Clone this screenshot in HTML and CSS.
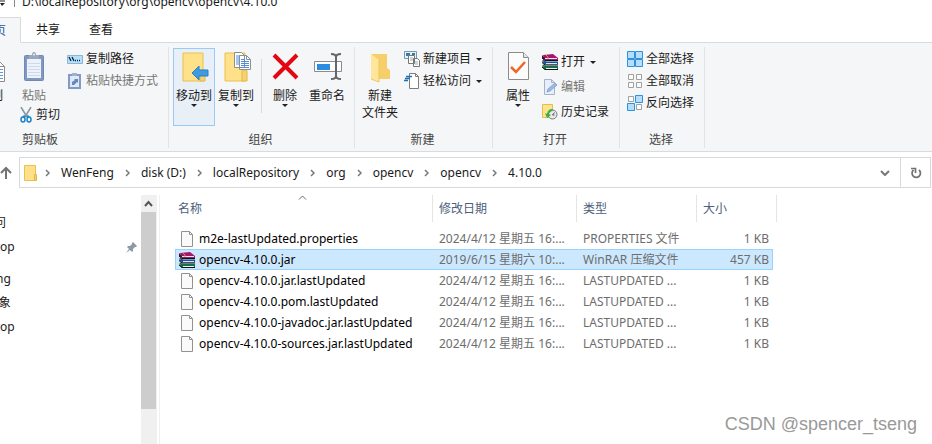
FILE: index.html
```html
<!DOCTYPE html>
<html lang="zh-CN">
<head>
    <meta charset="UTF-8">
    <meta name="viewport" content="width=device-width, initial-scale=1.0">
    <title>D:\localRepository\org\opencv\opencv\4.10.0</title>
    <link rel="stylesheet" href="styles.css">
</head>
<body>
    <!-- Shared icons -->
    <svg class="icon-defs" width="0" height="0">
        <symbol id="icon-folder" viewBox="0 0 27 32">
            <path d="M1 1h20v28H1z" fill="#ffe18a" stroke="#ebc04a"/>
            <path d="M18 29V19q0-1 1-1h3q1 0 1 1v10z" fill="#f5d374" stroke="#e3b840"/>
        </symbol>
        <symbol id="icon-rar" viewBox="0 0 16 16">
            <path d="M1 1L11 0l5 4v2H3z" fill="#a3186c"/>
            <path d="M0 1l3 3v2L0 4z" fill="#4a0831"/>
            <path d="M3 4h12v1H3z" fill="#eee"/>
            <path d="M1 5.500l3 2h12v3H3L0 8z" fill="#1c4d9c"/>
            <path d="M4 9h11v1H4z" fill="#d9e4f4"/>
            <path d="M1 10.500l3 1.500h12v4H3L0 13z" fill="#16704c"/>
            <path d="M4 14h11v1H4z" fill="#e8f4ea"/>
            <path d="M0 4l3 2.500h13M0 8.500L3 11h13M0 13l3 2.500h13" fill="none" stroke="#111"/>
            <path d="M4 1l2 2v2M1 7v1M1 12v1" fill="none" stroke="#c79a2e"/>
        </symbol>
        <symbol id="icon-file" viewBox="0 0 12 16">
            <path d="M.5.5h8l3 3v12H.5z" fill="#fafafa" stroke="#929292"/>
            <path d="M8.500.5v3h3" fill="none" stroke="#929292"/>
        </symbol>
        <symbol id="icon-chevron" viewBox="0 0 5 8">
            <path d="M1 1l3 3-3 3" fill="none" stroke="#777" stroke-width="1.500"/>
        </symbol>
    </svg>

    <!-- Title bar -->
    <header class="titlebar">
        <svg class="qat-arrow" width="5" height="7" viewBox="0 0 5 7"><path d="M0 1h5" stroke="#222"/><path d="M0 3h5L2 6z" fill="#222"/></svg>
        <span class="titlebar-line"></span>
        <span class="titlebar-text">D:\localRepository\org\opencv\opencv\4.10.0</span>
    </header>

    <!-- Tabs -->
    <nav class="tabs">
        <a class="tab active" href="#home">主页</a>
        <a class="tab" href="#share">共享</a>
        <a class="tab" href="#view">查看</a>
    </nav>

    <!-- Ribbon -->
    <div class="ribbon" id="home">
        <section class="group group-clipboard">
            <div class="group-body">
                <button class="big-btn">
                    <svg width="28" height="32" viewBox="0 0 28 32"><path d="M8.500 9.500h14l5 5v15h-19z" fill="#fff" stroke="#8c8c8c"/><path d="M22.500 9.500v5h5" fill="none" stroke="#8c8c8c"/><path d="M11 14.500h10M11 17.500h15M11 20.500h15M11 23.500h15M11 26.500h15" stroke="#5f98dc"/></svg>
                    <span>复制</span>
                </button>
                <div class="paste-col">
                    <button class="big-btn disabled">
                        <svg width="22" height="32" viewBox="0 0 22 32"><rect x="1.500" y="3.500" width="19" height="25" rx="1" fill="#8199c2" stroke="#7189b4"/><path d="M4 7h14v19H4z" fill="#edf2fb"/><path d="M5 11.500h12M5 14.500h12M5 17.500h12M5 20.500h12M5 23.500h12" stroke="#cfd9eb"/><path d="M6 7V3h3q0-3 2-3t2 3h3v4z" fill="#9aa7bd"/><circle cx="11" cy="2.500" r="1" fill="#eef"/></svg>
                        <span>粘贴</span>
                    </button>
                    <button class="small-btn">
                        <svg width="12" height="16" viewBox="0 0 12 16"><path d="M1 0l6 10M11 0L5 10" stroke="#8a949e" stroke-width="1.500"/><path d="M5 9l-2 1M7 9l2 1" stroke="#1a86c8" stroke-width="2"/><ellipse cx="3" cy="12.500" rx="2" ry="2.500" fill="none" stroke="#1a86c8" stroke-width="1.500"/><ellipse cx="9" cy="12.500" rx="2" ry="2.500" fill="none" stroke="#1a86c8" stroke-width="1.500"/></svg>
                        <span>剪切</span>
                    </button>
                </div>
                <div class="small-col">
                    <button class="small-btn">
                        <svg width="16" height="16" viewBox="0 0 16 16"><path d="M.5 4.500h15v8H.5z" fill="#b5e0fb" stroke="#8cb5d2"/><path d="M2 6l2 4M5 6l2 4" stroke="#123" stroke-width="1.300"/><path d="M8 9.500h1M10 9.500h1M12 9.500h1" stroke="#123" stroke-width="1.500"/></svg>
                        <span>复制路径</span>
                    </button>
                    <button class="small-btn disabled">
                        <svg width="16" height="16" viewBox="0 0 16 16"><rect x="2" y="2" width="11" height="13" fill="#dfe8f6" stroke="#839bc4" stroke-width="2"/><path d="M5 0h5v3H5z" fill="#9fb0cd"/><path d="M5 12V9l3-2-1-1h4v4l-1-1-3 3z" fill="#6886b8"/></svg>
                        <span>粘贴快捷方式</span>
                    </button>
                </div>
            </div>
            <h2 class="group-label">剪贴板</h2>
        </section>

        <section class="group">
            <div class="group-body">
                <button class="big-btn selected">
                    <svg width="32" height="32" viewBox="0 0 32 32"><use href="#icon-folder" x="4" y="0" width="27" height="32"/><path d="M14 21l7-7v4h9v6h-9v4z" fill="#3e9ae3" stroke="#2b7fc4"/></svg>
                    <span>移动到</span>
                    <i class="arrow"></i>
                </button>
                <button class="big-btn">
                    <svg width="32" height="32" viewBox="0 0 32 32"><use href="#icon-folder" x="4" y="0" width="27" height="32"/><path d="M14.500.5h7l3 3v12h-10zM19.500 3.500h7l4 4v10h-11z" fill="#fff" stroke="#8a8f96"/><path d="M26.500 3.500v4h4" fill="none" stroke="#8a8f96"/><path d="M16 4h4M16 6h3M16 8h3M16 10h3M16 12h3M21 7.500h4M21 9.500h8M21 11.500h8M21 13.500h8M21 15.500h8" stroke="#4f8fda"/></svg>
                    <span>复制到</span>
                    <i class="arrow"></i>
                </button>
                <span class="divider"></span>
                <button class="big-btn">
                    <svg width="32" height="32" viewBox="0 0 32 32"><path d="M5 3l23 23M28 3L5 26" stroke="#e30613" stroke-width="4"/></svg>
                    <span>删除</span>
                    <i class="arrow"></i>
                </button>
                <button class="big-btn">
                    <svg width="32" height="32" viewBox="0 0 32 32"><path d="M3.500 9.500h27v10h-27z" fill="#fff" stroke="#8b8b8b"/><path d="M6 12h13v6H6z" fill="#2b8de0"/><path d="M20 2q5 0 5 3v19q0 3-5 3M30 2q-5 0-5 3M25 24q0 3 5 3" fill="none" stroke="#666" stroke-width="2"/></svg>
                    <span>重命名</span>
                </button>
            </div>
            <h2 class="group-label">组织</h2>
        </section>

        <section class="group">
            <div class="group-body">
                <button class="big-btn">
                    <svg width="32" height="32" viewBox="0 0 32 32"><path d="M7 2h16v14l3 2v9H7z" fill="#f6cf6b"/><path d="M7 2l8 6v22l-8-3z" fill="#ffe69b"/><path d="M15 8v22l-8-3" fill="none" stroke="#f0c85d"/></svg>
                    <span>新建<br>文件夹</span>
                </button>
                <div class="small-col">
                    <button class="small-btn">
                        <svg width="16" height="16" viewBox="0 0 16 16"><path d="M.5.5h12v7H.5z" fill="#e7f2fa" stroke="#7b98aa"/><path d="M2 2h4v3H2zM8 2h3v2H8z" fill="#3579a5"/><path d="M4.500 4.500h6v8h-6zM9.500 7.500h4l2 2v6h-6z" fill="#fff" stroke="#777"/><path d="M6 7h3M6 9h3M11 11h3M11 13h3" stroke="#9aa"/></svg>
                        <span>新建项目</span>
                        <i class="arrow"></i>
                    </button>
                    <button class="small-btn">
                        <svg width="16" height="16" viewBox="0 0 16 16"><path d="M5.500.5h6l3 3v12h-9z" fill="#fff" stroke="#7d7d7d"/><path d="M11.500.5v3h3" fill="none" stroke="#7d7d7d"/><path d="M2 3.500h6M1 5.500h5M0 7.500h4" stroke="#1d71b8" stroke-width="1.300"/></svg>
                        <span>轻松访问</span>
                        <i class="arrow"></i>
                    </button>
                </div>
            </div>
            <h2 class="group-label">新建</h2>
        </section>

        <section class="group">
            <div class="group-body">
                <button class="big-btn">
                    <svg width="32" height="32" viewBox="0 0 32 32"><path d="M6.500.5h15l5 5v22h-20z" fill="#fcfcfc" stroke="#8c8c8c"/><path d="M21.500.5v5h5" fill="#e4e4e4" stroke="#8c8c8c"/><path d="M9 15l5 5 9-10" fill="none" stroke="#f26522" stroke-width="2.500"/></svg>
                    <span>属性</span>
                    <i class="arrow"></i>
                </button>
                <div class="small-col loose">
                    <button class="small-btn">
                        <svg width="16" height="16"><use href="#icon-rar"/></svg>
                        <span>打开</span>
                        <i class="arrow"></i>
                    </button>
                    <button class="small-btn disabled">
                        <svg width="16" height="16" viewBox="0 0 16 16"><path d="M2.500.5h7l3 3v12h-10z" fill="#e8eefa" stroke="#a4b3cc"/><path d="M9.500.5v3h3" fill="none" stroke="#a4b3cc"/><path d="M5 13l1-3 7-6 2 2-7 6z" fill="#9eb9e2" stroke="#8ba7d3"/></svg>
                        <span>编辑</span>
                    </button>
                    <button class="small-btn">
                        <svg width="16" height="16" viewBox="0 0 16 16"><path d="M.5.5h10v13H.5z" fill="#ffe28a" stroke="#e5bd4c"/><circle cx="10.500" cy="10.500" r="4.500" fill="#e7e9eb" stroke="#777"/><path d="M10.500 11l2-2.500M10.500 11h2" stroke="#555"/><path d="M10 5q-4 0-5 5l-2-1 2 5 4-3-2-1q1-3 4-3z" fill="#3aad45"/></svg>
                        <span>历史记录</span>
                    </button>
                </div>
            </div>
            <h2 class="group-label">打开</h2>
        </section>

        <section class="group">
            <div class="group-body">
                <div class="small-col">
                    <button class="small-btn">
                        <svg width="16" height="16" viewBox="0 0 16 16"><path d="M.5.5h7v7h-7zM8.500.5h7v7h-7zM.5 8.500h7v7h-7zM8.500 8.500h7v7h-7z" fill="#b6defb" stroke="#2b91e0"/></svg>
                        <span>全部选择</span>
                    </button>
                    <button class="small-btn">
                        <svg width="16" height="16" viewBox="0 0 16 16"><path d="M1.500 1.500h5v5h-5zM9.500 1.500h5v5h-5zM1.500 9.500h5v5h-5zM9.500 9.500h5v5h-5z" fill="#fcfcfc" stroke="#a0a0a0"/></svg>
                        <span>全部取消</span>
                    </button>
                    <button class="small-btn">
                        <svg width="16" height="16" viewBox="0 0 16 16"><path d="M1.500 1.500h5v5h-5zM9.500 9.500h5v5h-5z" fill="#fcfcfc" stroke="#a0a0a0"/><path d="M8.500.5h7v7h-7zM.5 8.500h7v7h-7z" fill="#b6defb" stroke="#2b91e0"/></svg>
                        <span>反向选择</span>
                    </button>
                </div>
            </div>
            <h2 class="group-label">选择</h2>
        </section>
    </div>

    <!-- Address bar -->
    <div class="address-row">
        <button class="up-btn" aria-label="向上"><svg width="12" height="14" viewBox="0 0 12 14"><path d="M6 13V2M1 7l5-5 5 5" fill="none" stroke="#737373" stroke-width="2"/></svg></button>
        <div class="address">
            <nav class="crumbs">
                <svg class="crumb-folder" width="14" height="17" viewBox="0 0 14 17"><path d="M.5.5h11v15H.5z" fill="#ffe18a" stroke="#ebc04a"/><path d="M10.500 15.500v-6h2v6z" fill="#f5d374" stroke="#e3b840"/></svg>
                <svg width="5" height="8"><use href="#icon-chevron"/></svg>
                <a href="#">WenFeng</a>
                <svg width="5" height="8"><use href="#icon-chevron"/></svg>
                <a href="#">disk (D:)</a>
                <svg width="5" height="8"><use href="#icon-chevron"/></svg>
                <a href="#">localRepository</a>
                <svg width="5" height="8"><use href="#icon-chevron"/></svg>
                <a href="#">org</a>
                <svg width="5" height="8"><use href="#icon-chevron"/></svg>
                <a href="#">opencv</a>
                <svg width="5" height="8"><use href="#icon-chevron"/></svg>
                <a href="#">opencv</a>
                <svg width="5" height="8"><use href="#icon-chevron"/></svg>
                <a href="#">4.10.0</a>
            </nav>
            <button class="address-btn" aria-label="历史位置"><svg width="10" height="6" viewBox="0 0 10 6"><path d="M1 1l4 4 4-4" fill="none" stroke="#777" stroke-width="2"/></svg></button>
            <button class="address-btn refresh" aria-label="刷新"><svg width="12" height="12" viewBox="0 0 12 12"><path d="M9 3A4.200 4.200 0 1 1 3.500 3" fill="none" stroke="#737373" stroke-width="1.700"/><path d="M1 1.500h4.500V6" fill="none" stroke="#737373" stroke-width="1.700"/></svg></button>
        </div>
    </div>

    <!-- Folder tree and files -->
    <div class="content">
        <aside class="sidebar">
            <ul class="tree">
                <li><a href="#">快速访问</a></li>
                <li class="child">
                    <a href="#">Desktop</a>
                    <svg width="11" height="11" viewBox="0 0 11 11"><path d="M7 0l4 4-1 1H9L7 7v2L6 10 4 8 0 11l3-4-2-2 1-1h2l2-2V1z" fill="#8b9aa8"/></svg>
                </li>
                <li class="root"><a href="#">WenFeng</a></li>
                <li class="child"><a href="#">3D 对象</a></li>
                <li class="child"><a href="#">Desktop</a></li>
            </ul>
            <div class="scrollbar">
                <svg width="16" height="17" viewBox="0 0 16 17"><path d="M4 11l3.500-4 3.500 4" fill="none" stroke="#555" stroke-width="2"/></svg>
                <div class="scroll-thumb"></div>
            </div>
        </aside>

        <main class="files">
            <table class="file-table">
                <colgroup>
                    <col class="col-name">
                    <col class="col-date">
                    <col class="col-type">
                    <col class="col-size">
                    <col class="col-end">
                </colgroup>
                <thead>
                    <tr>
                        <th>名称<svg class="sort" width="9" height="5" viewBox="0 0 9 5"><path d="M1 4.500l3.500-3.500L8 4.500" fill="none" stroke="#666"/></svg></th>
                        <th>修改日期</th>
                        <th>类型</th>
                        <th colspan="2">大小</th>
                    </tr>
                </thead>
                <tbody>
                    <tr>
                        <td><div class="file-name"><svg width="16" height="16"><use href="#icon-file"/></svg>m2e-lastUpdated.properties</div></td>
                        <td>2024/4/12 星期五 16:...</td>
                        <td>PROPERTIES 文件</td>
                        <td>1 KB</td>
                    </tr>
                    <tr class="selected">
                        <td><div class="file-name"><svg width="16" height="16"><use href="#icon-rar"/></svg>opencv-4.10.0.jar</div></td>
                        <td>2019/6/15 星期六 10:...</td>
                        <td>WinRAR 压缩文件</td>
                        <td>457 KB</td>
                    </tr>
                    <tr>
                        <td><div class="file-name"><svg width="16" height="16"><use href="#icon-file"/></svg>opencv-4.10.0.jar.lastUpdated</div></td>
                        <td>2024/4/12 星期五 16:...</td>
                        <td>LASTUPDATED ...</td>
                        <td>1 KB</td>
                    </tr>
                    <tr>
                        <td><div class="file-name"><svg width="16" height="16"><use href="#icon-file"/></svg>opencv-4.10.0.pom.lastUpdated</div></td>
                        <td>2024/4/12 星期五 16:...</td>
                        <td>LASTUPDATED ...</td>
                        <td>1 KB</td>
                    </tr>
                    <tr>
                        <td><div class="file-name"><svg width="16" height="16"><use href="#icon-file"/></svg>opencv-4.10.0-javadoc.jar.lastUpdated</div></td>
                        <td>2024/4/12 星期五 16:...</td>
                        <td>LASTUPDATED ...</td>
                        <td>1 KB</td>
                    </tr>
                    <tr>
                        <td><div class="file-name"><svg width="16" height="16"><use href="#icon-file"/></svg>opencv-4.10.0-sources.jar.lastUpdated</div></td>
                        <td>2024/4/12 星期五 16:...</td>
                        <td>LASTUPDATED ...</td>
                        <td>1 KB</td>
                    </tr>
                </tbody>
            </table>
        </main>
    </div>

    <div class="watermark">CSDN @spencer_tseng</div>
</body>
</html>
```
FILE: styles.css
```css
* {
    box-sizing: border-box;
}

body {
    display: flex;
    flex-direction: column;
    height: 100vh;
    margin: 0;
    overflow: hidden;
    background: #fff;
    color: #1a1a1a;
    font-family: "Noto Sans", "Noto Sans CJK SC", sans-serif;
    font-size: 12px;
    line-height: 16px;
}

a {
    color: inherit;
    text-decoration: none;
}

button {
    padding: 0;
    border: 0;
    background: none;
    color: inherit;
    font: inherit;
}

svg {
    display: block;
    flex: none;
}

.icon-defs {
    position: absolute;
}

/* Title bar */
.titlebar {
    display: flex;
    flex: none;
    height: 17px;
    overflow: hidden;
}

.titlebar-line {
    width: 1px;
    height: 7px;
    margin: 0 7px 0 9px;
    background: #888;
}

.titlebar-text {
    margin-top: -6px;
}

/* Tabs */
.tabs {
    display: flex;
    flex: none;
    height: 26px;
    line-height: 25px;
}

.tab {
    padding: 0 14px 0 15px;
    border-bottom: 1px solid #dadbdc;
}

.tabs::after {
    content: "";
    flex: 1;
    border-bottom: 1px solid #dadbdc;
}

.tab.active {
    margin-left: -34px;
    border: 1px solid #dadbdc;
    border-bottom-color: #f5f6f7;
    background: #f5f6f7;
    color: #2b579a;
}

/* Ribbon */
.ribbon {
    display: flex;
    flex: none;
    height: 109px;
    padding: 4px 0 3px;
    border-bottom: 1px solid #dadbdc;
    background: #f5f6f7;
}

.group {
    display: flex;
    flex-direction: column;
    padding: 0 6px 0 4px;
    border-right: 1px solid #e2e3e4;
}

.group-clipboard {
    margin-left: -90px;
    padding: 0 6px 0 60px;
}

.group-body {
    display: flex;
    height: 85px;
}

.group-label {
    margin: 0;
    color: #444;
    font-size: 12px;
    font-weight: normal;
    line-height: 16px;
    text-align: center;
}

.group-clipboard .group-label {
    margin: 0 0 0 52px;
    text-align: left;
}

.big-btn {
    display: flex;
    flex-direction: column;
    align-items: center;
    width: 42px;
    height: 78px;
    margin-top: 1px;
    padding-top: 3px;
    border: 1px solid transparent;
    white-space: nowrap;
}

.big-btn span {
    margin-top: 3px;
    line-height: 17px;
}

.big-btn.selected {
    border-color: #99cbf7;
    background: #e8eff7;
}

.disabled {
    color: #767676;
}

.arrow {
    border: 3px solid transparent;
    border-top-color: #222;
    border-bottom: 0;
}

.divider {
    width: 1px;
    height: 54px;
    margin: 12px 2px 0 4px;
    background: #dadbdc;
}

.small-col {
    display: flex;
    flex-direction: column;
    gap: 6px;
    padding: 4px 4px 0 3px;
}

.small-col.loose {
    gap: 9px;
    padding-top: 7px;
}

.small-btn {
    display: flex;
    align-items: center;
    gap: 3px;
    height: 16px;
    white-space: nowrap;
}

.small-btn .arrow {
    margin-left: 2px;
}

.paste-col {
    display: flex;
    flex-direction: column;
    width: 52px;
}

.paste-col .big-btn {
    width: 44px;
    height: 59px;
}

.paste-col .small-btn {
    gap: 4px;
    margin-left: 8px;
}

/* Address bar */
.address-row {
    display: flex;
    flex: none;
    align-items: center;
    gap: 7px;
    padding: 5px 1px 7px 0;
}

.address {
    display: flex;
    flex: 1;
    height: 31px;
    border: 1px solid #d9d9d9;
}

.crumbs {
    display: flex;
    flex: 1;
    align-items: center;
    gap: 11px;
    padding-left: 4px;
}

.crumbs svg {
    margin-top: 1px;
}

.crumbs .crumb-folder {
    margin-right: -4px;
}

.address-btn {
    display: flex;
    align-items: center;
    justify-content: center;
    width: 30px;
}

.refresh {
    border-left: 1px solid #d9d9d9;
}

/* Content */
.content {
    display: flex;
    flex: 1;
    min-height: 0;
}

.sidebar {
    display: flex;
    width: 160px;
    padding-right: 2px;
    border-right: 1px solid #f0f0f0;
    overflow: hidden;
}

.tree {
    flex: 1;
    margin: 0 0 0 -42px;
    padding: 16px 0 0;
    list-style: none;
}

.tree li {
    display: flex;
    align-items: center;
    justify-content: space-between;
    height: 24px;
    padding-right: 4px;
}

.tree .child {
    padding-left: 10px;
}

.tree .root {
    margin-top: 8px;
}

.scrollbar {
    width: 16px;
    background: #f0f0f0;
}

.scroll-thumb {
    width: 15px;
    height: 79%;
    background: #cdcdcd;
}

.files {
    flex: 1;
    padding-left: 15px;
}

.file-table {
    width: 602px;
    border-spacing: 0;
    table-layout: fixed;
}

.col-name {
    width: 258px;
}

.col-date {
    width: 144px;
}

.col-type {
    width: 120px;
}

.col-size {
    width: 76px;
}

.col-end {
    width: 4px;
}

.file-table th {
    position: relative;
    height: 27px;
    padding: 0 0 0 6px;
    border-right: 1px solid #e5e5e5;
    color: #4c607a;
    font-weight: normal;
    text-align: left;
}

.file-table th:first-child {
    padding-left: 3px;
}

.sort {
    position: absolute;
    top: 0;
    left: 48%;
}

.file-table tbody::before {
    content: "";
    display: block;
    height: 6px;
}

.file-table td {
    height: 21px;
    padding: 0 0 0 6px;
    border: solid transparent;
    border-width: 1px 0;
    color: #6d6d6d;
    line-height: 19px;
    white-space: nowrap;
}

.file-table td:first-child {
    padding-left: 3px;
    border-left-width: 1px;
    color: #000;
}

.file-table td:last-child {
    padding: 0 3px 0 0;
    border-right-width: 1px;
    text-align: right;
}

.file-table .selected td {
    border-color: #99d1ff;
    background: #cce8ff;
}

.file-name {
    display: flex;
    align-items: center;
    gap: 4px;
}

.watermark {
    position: absolute;
    right: 15px;
    bottom: 8px;
    color: #999;
    font-family: "Liberation Sans", Arial, sans-serif;
    font-size: 18px;
    line-height: 24px;
}
```
